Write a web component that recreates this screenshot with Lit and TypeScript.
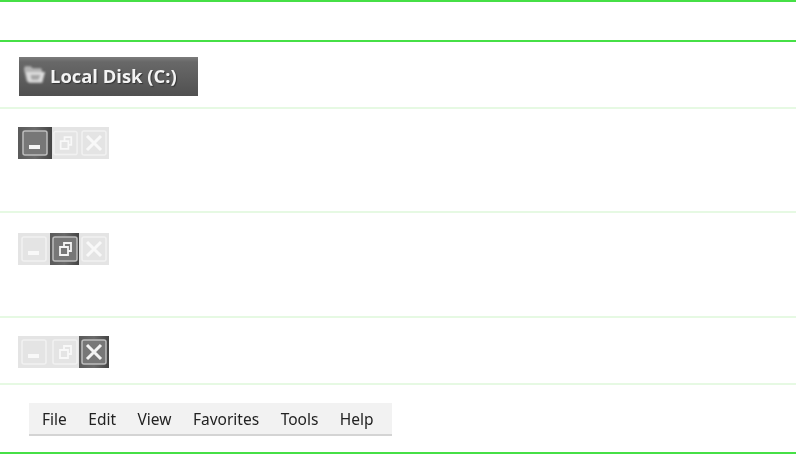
import { LitElement, html, css, svg } from 'lit';
import { customElement } from 'lit/decorators.js';

type Glyph = 'min' | 'restore' | 'close';

const glyphs = {
    min: svg`<rect x="8" y="16" width="11" height="4" fill="currentColor"/>`,
    restore: svg`<path d="M9 12h8v8H9zM13 12V8h7v8h-3" fill="none" stroke="currentColor" stroke-width="1.8"/>`,
    close: svg`<path d="M7 7l14 14M21 7L7 21" fill="none" stroke="currentColor" stroke-width="3"/>`,
};

@customElement('app-root')
export class AppRoot extends LitElement {
    static styles = css`
    :host {
      display: block;
      width: 796px;
      height: 454px;
      background: #fff;
      font-family: 'Liberation Sans', Arial, sans-serif;
      overflow: hidden;
    }
    .row {
      display: flex;
      align-items: flex-start;
      box-sizing: border-box;
      border-bottom: 2px solid #e6f9e3;
    }
    .row.strong { border-bottom-color: #46e046; }
    .top { height: 2px; background: #46e046; }
    .head { height: 40px; }
    .r1 { height: 67px; padding: 15px 0 0 19px; }
    .r2 { height: 104px; padding: 18px 0 0 18px; }
    .r3 { height: 105px; padding: 20px 0 0 18px; }
    .r4 { height: 67px; padding: 18px 0 0 18px; }
    .r5 { height: 69px; padding: 18px 0 0 29px; }

    .titlebar {
      display: flex;
      align-items: center;
      gap: 3px;
      box-sizing: border-box;
      width: 179px;
      height: 39px;
      padding: 0 0 3px 3px;
      background: linear-gradient(#7c7c7c 0, #686868 5px, #5e5e5e 20px, #505050 100%);
      color: #f4f4f4;
      font-family: 'Open Sans', sans-serif;
      font-size: 18.4px;
      font-weight: 700;
      white-space: nowrap;
    }
    .titlebar svg { flex: none; filter: blur(0.8px); }
    .titlebar span { filter: blur(0.5px); text-shadow: 1px 1px 1px #333; }

    .buttons { display: flex; height: 32px; width: 91px; filter: blur(0.6px); }
    .btn {
      display: flex;
      align-items: center;
      justify-content: center;
      background: #e4e4e4;
      color: #f8f8f8;
    }
    .btn:nth-child(1) { width: 32px; }
    .btn:nth-child(2) { width: 29px; }
    .btn:nth-child(3) { width: 30px; }
    .btn.active:nth-child(1) { width: 34px; }
    .btn.active:nth-child(1) + .btn { width: 27px; }
    .btn .frame { fill: none; stroke: #f1f1f1; stroke-width: 1.5; }
    .btn.active { background: linear-gradient(90deg, #5a5a5a, #6a6a6a 50%, #444); color: #f4f4f4; }
    .btn.active .frame { fill: #777; stroke: #bdbdbd; }

    .menubar {
      display: flex;
      gap: 21.5px;
      box-sizing: border-box;
      width: 363px;
      height: 33px;
      padding: 5px 0 0 13px;
      background: #f2f2f2;
      border-bottom: 2px solid #d4d4d4;
      color: #222;
      font-family: 'Noto Sans', sans-serif;
      font-size: 15.5px;
    }
    .menubar span { filter: blur(0.4px); }
  `;

    private renderButtons(active: Glyph) {
        const order: Glyph[] = ['min', 'restore', 'close'];
        return html`
      <div class="buttons">
        ${order.map(g => html`
          <div class="btn ${g === active ? 'active' : ''}">
            <svg width="28" height="28" viewBox="0 0 28 28">
              <rect class="frame" x="2" y="2" width="24" height="24" rx="2"></rect>
              ${glyphs[g]}
            </svg>
          </div>`)}
      </div>`;
    }

    render() {
        return html`
      <div class="top"></div>
      <div class="row strong head"></div>
      <div class="row r1">
        <div class="titlebar">
          <svg width="25" height="22" viewBox="0 0 26 22">
            <path d="M2 5l1-3h6l2 2h9l1 3v11H5z" fill="#b5b5b5"/>
            <path d="M4 8h20l-3 11H7z" fill="#dcdcdc"/>
            <path d="M9 11h10l-2 5H10z" fill="#a6a6a6"/>
          </svg>
          <span>Local Disk (C:)</span>
        </div>
      </div>
      <div class="row r2">${this.renderButtons('min')}</div>
      <div class="row r3">${this.renderButtons('restore')}</div>
      <div class="row r4">${this.renderButtons('close')}</div>
      <div class="row strong r5">
        <div class="menubar">
          ${['File', 'Edit', 'View', 'Favorites', 'Tools', 'Help'].map(m => html`<span>${m}</span>`)}
        </div>
      </div>
    `;
    }
}
